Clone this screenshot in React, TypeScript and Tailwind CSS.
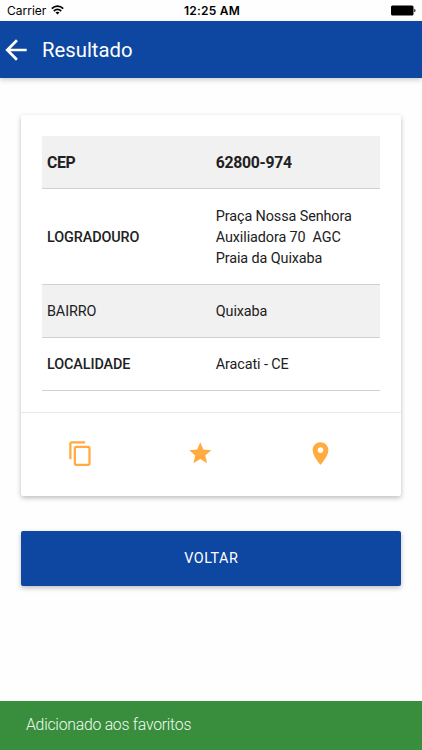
import React from 'react';

function Icon({ d, className }: { d: string; className: string }) {
  return (
    <svg viewBox="0 0 24 24" fill="currentColor" className={className}>
      <path d={d} />
    </svg>
  );
}

function StatusBar() {
  return (
    <div className="grid h-[21px] grid-cols-3 items-center pl-[7px] pr-1.5 font-['Inter',sans-serif] text-[12px] leading-[21px] text-black">
      <div className="flex items-center gap-[5px]">
        <span>Carrier</span>
        <svg viewBox="0 0 13 10" className="mb-px h-[10px] w-[13px]" fill="none" stroke="#000" strokeWidth="1.7">
          <path d="M0.8 3.6C4 0.4 9 0.4 12.2 3.6M2.8 6C5 4 8 4 10.2 6" />
          <path d="M4.5 7.5C5.7 6.5 7.3 6.5 8.5 7.5L6.5 9.6Z" fill="#000" stroke="none" />
        </svg>
      </div>
      <span className="pl-px text-center font-semibold tracking-[0.2px]">12:25 AM</span>
      <svg viewBox="0 0 25 11" className="h-[11px] w-[25px] justify-self-end">
        <rect x="0" y="0.5" width="22.5" height="10" rx="1.5" />
        <path d="M23.3 3.7C24.8 4 24.8 7 23.3 7.3Z" />
      </svg>
    </div>
  );
}

const rows = [
  { label: 'CEP', value: '62800-974', row: 'h-[53px] bg-[#f1f1f1] text-[15.8px] font-bold tracking-[-0.3px]', labelClass: '' },
  { label: 'LOGRADOURO', value: 'Praça Nossa Senhora\nAuxiliadora 70  AGC\nPraia da Quixaba', row: 'h-[96px] tracking-[-0.1px]', labelClass: 'font-medium' },
  { label: 'BAIRRO', value: 'Quixaba', row: 'h-[53px] bg-[#f1f1f1] tracking-[-0.1px]', labelClass: '' },
  { label: 'LOCALIDADE', value: 'Aracati - CE', row: 'h-[53px] tracking-[-0.1px]', labelClass: 'font-medium' },
];

export default function App() {
  return (
    <div className="flex h-[750px] w-[422px] flex-col overflow-hidden bg-[#fefefe] font-['Roboto',sans-serif] text-[14.4px] text-[#212121]">
      <StatusBar />
      <header className="flex h-[57px] items-center bg-[#0d47a1] pt-px text-white shadow-[0_2px_5px_rgba(0,0,0,0.2)]">
        <Icon className="h-[32px] w-[32px]" d="M20 11H7.83l5.59-5.59L12 4l-8 8 8 8 1.41-1.41L7.83 13H20v-2z" />
        <h1 className="ml-[10px] text-[20.3px]">Resultado</h1>
      </header>
      <main className="flex flex-1 flex-col pl-[21px] pr-[21.5px] pt-[37px]">
        <section className="rounded-[2px] bg-white shadow-[0_2px_5px_rgba(0,0,0,0.26)]">
          <div className="px-[21px] pt-[21px] pb-[21px]">
            {rows.map((r) => (
              <div key={r.label} className={`grid grid-cols-2 items-center border-b border-[#d0d0d0] pt-0.5 leading-[21.3px] ${r.row}`}>
                <span className={`pl-[5px] ${r.labelClass}`}>{r.label}</span>
                <span className="whitespace-pre pl-[5px]">{r.value}</span>
              </div>
            ))}
          </div>
          <div className="flex h-[84px] items-center border-t border-[#e8e8e8] pb-[3px] pr-[20.5px] text-[#ffab40]">
            <div className="flex flex-1 justify-center">
              <Icon className="h-[27px] w-[27px]" d="M16 1H4c-1.1 0-2 .9-2 2v14h2V3h12V1zm3 4H8c-1.1 0-2 .9-2 2v14c0 1.1.9 2 2 2h11c1.1 0 2-.9 2-2V7c0-1.1-.9-2-2-2zm0 16H8V7h11v14z" />
            </div>
            <div className="flex flex-1 justify-center">
              <Icon className="h-[26.5px] w-[26.5px]" d="M12 17.27L18.18 21l-1.64-7.03L22 9.24l-7.19-.61L12 2 9.19 8.63 2 9.24l5.46 4.73L5.82 21z" />
            </div>
            <div className="flex flex-1 justify-center">
              <Icon className="h-[27px] w-[27px]" d="M12 2C8.13 2 5 5.13 5 9c0 5.25 7 13 7 13s7-7.75 7-13c0-3.87-3.13-7-7-7zm0 9.5c-1.38 0-2.5-1.12-2.5-2.5s1.12-2.5 2.5-2.5 2.5 1.12 2.5 2.5-1.12 2.5-2.5 2.5z" />
            </div>
          </div>
        </section>
        <button className="mt-[35px] h-[55px] rounded-[2px] bg-[#0d47a1] pt-px pl-px text-[14.4px] tracking-[0.5px] text-white shadow-[0_2px_5px_rgba(0,0,0,0.26)]">
          VOLTAR
        </button>
      </main>
      <footer className="flex h-[49px] items-center bg-[#388e3c] pb-px pl-[26px] text-[15.8px] font-light tracking-[-0.25px] text-[#f2faf2]">
        Adicionado aos favoritos
      </footer>
    </div>
  );
}
